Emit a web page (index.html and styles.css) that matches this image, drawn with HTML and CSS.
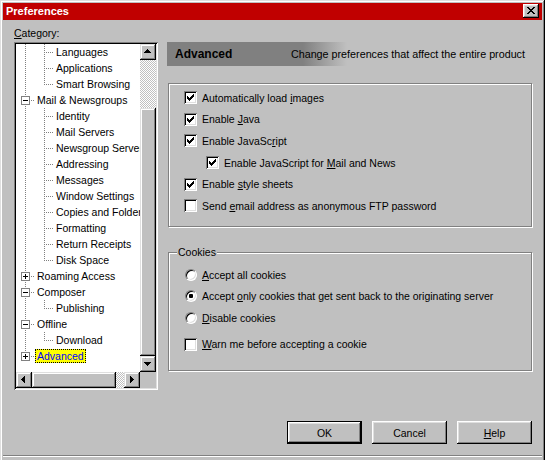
FILE: index.html
```html
<!DOCTYPE html>
<html>
<head>
<meta charset="utf-8">
<title>Preferences</title>
<link rel="stylesheet" href="styles.css">
</head>
<body>
<div class="window">
  <div class="titlebar">
    <span class="title">Preferences</span>
    <span class="close"><svg width="8" height="7" viewBox="0 0 8 7"><path d="M0 0h2v1H0zM6 0h2v1H6zM1 1h2v1H1zM5 1h2v1H5zM2 2h4v1H2zM3 3h2v1H3zM2 4h4v1H2zM1 5h2v1H1zM5 5h2v1H5zM0 6h2v1H0zM6 6h2v1H6z" fill="#000"/></svg></span>
  </div>

  <div class="main">
    <div class="left">
      <div class="cat-label"><u>C</u>ategory:</div>
      <div class="treebox">
        <div class="tree-area">
          <div class="tree">
            <div class="row"><span class="ind"></span><span class="br"></span><span class="lbl">Languages</span></div>
            <div class="row"><span class="ind"></span><span class="br"></span><span class="lbl">Applications</span></div>
            <div class="row"><span class="ind"></span><span class="br last"></span><span class="lbl">Smart Browsing</span></div>
            <div class="row"><span class="node"><span class="box"></span></span><span class="lbl">Mail &amp; Newsgroups</span></div>
            <div class="row"><span class="ind"></span><span class="br"></span><span class="lbl">Identity</span></div>
            <div class="row"><span class="ind"></span><span class="br"></span><span class="lbl">Mail Servers</span></div>
            <div class="row"><span class="ind"></span><span class="br"></span><span class="lbl">Newsgroup Servers</span></div>
            <div class="row"><span class="ind"></span><span class="br"></span><span class="lbl">Addressing</span></div>
            <div class="row"><span class="ind"></span><span class="br"></span><span class="lbl">Messages</span></div>
            <div class="row"><span class="ind"></span><span class="br"></span><span class="lbl">Window Settings</span></div>
            <div class="row"><span class="ind"></span><span class="br"></span><span class="lbl">Copies and Folders</span></div>
            <div class="row"><span class="ind"></span><span class="br"></span><span class="lbl">Formatting</span></div>
            <div class="row"><span class="ind"></span><span class="br"></span><span class="lbl">Return Receipts</span></div>
            <div class="row"><span class="ind"></span><span class="br last"></span><span class="lbl">Disk Space</span></div>
            <div class="row"><span class="node"><span class="box plus"></span></span><span class="lbl">Roaming Access</span></div>
            <div class="row"><span class="node"><span class="box"></span></span><span class="lbl">Composer</span></div>
            <div class="row"><span class="ind"></span><span class="br last"></span><span class="lbl">Publishing</span></div>
            <div class="row"><span class="node"><span class="box"></span></span><span class="lbl">Offline</span></div>
            <div class="row"><span class="ind"></span><span class="br last"></span><span class="lbl">Download</span></div>
            <div class="row"><span class="node last"><span class="box plus"></span></span><span class="lbl sel">Advanced</span></div>
          </div>
          <div class="vscroll">
            <div class="sbtn"><svg width="16" height="16" viewBox="0 0 16 16"><path d="M7 5h1v1H7zM6 6h3v1H6zM5 7h5v1H5zM4 8h7v1H4z" fill="#000"/></svg></div>
            <div class="vtrack"></div>
            <div class="vthumb"></div>
            <div class="sbtn"><svg width="16" height="16" viewBox="0 0 16 16"><path d="M4 6h7v1H4zM5 7h5v1H5zM6 8h3v1H6zM7 9h1v1H7z" fill="#000"/></svg></div>
          </div>
        </div>
        <div class="hrow">
          <div class="hscroll">
            <div class="sbtn"><svg width="16" height="16" viewBox="0 0 16 16"><path d="M5 7h1v1H5zM6 6h1v3H6zM7 5h1v5H7zM8 4h1v7H8z" fill="#000"/></svg></div>
            <div class="hthumb"></div>
            <div class="htrack"></div>
            <div class="sbtn"><svg width="16" height="16" viewBox="0 0 16 16"><path d="M6 4h1v7H6zM7 5h1v5H7zM8 6h1v3H8zM9 7h1v1H9z" fill="#000"/></svg></div>
          </div>
          <div class="corner"></div>
        </div>
      </div>
    </div>

    <div class="right">
      <div class="header">
        <span class="h-title">Advanced</span>
        <span class="h-desc">Change preferences that affect the entire product</span>
      </div>

      <div class="group opts">
        <div class="opt"><span class="cb"><svg width="13" height="13" viewBox="0 0 13 13"><path d="M3 5h1v3H3zM4 6h1v3H4zM5 7h1v3H5zM6 6h1v3H6zM7 5h1v3H7zM8 4h1v3H8zM9 3h1v3H9z" fill="#000"/></svg></span><span>Automatically load <u>i</u>mages</span></div>
        <div class="opt"><span class="cb"><svg width="13" height="13" viewBox="0 0 13 13"><path d="M3 5h1v3H3zM4 6h1v3H4zM5 7h1v3H5zM6 6h1v3H6zM7 5h1v3H7zM8 4h1v3H8zM9 3h1v3H9z" fill="#000"/></svg></span><span>Enable <u>J</u>ava</span></div>
        <div class="opt"><span class="cb"><svg width="13" height="13" viewBox="0 0 13 13"><path d="M3 5h1v3H3zM4 6h1v3H4zM5 7h1v3H5zM6 6h1v3H6zM7 5h1v3H7zM8 4h1v3H8zM9 3h1v3H9z" fill="#000"/></svg></span><span>Enable JavaSc<u>r</u>ipt</span></div>
        <div class="opt sub"><span class="cb"><svg width="13" height="13" viewBox="0 0 13 13"><path d="M3 5h1v3H3zM4 6h1v3H4zM5 7h1v3H5zM6 6h1v3H6zM7 5h1v3H7zM8 4h1v3H8zM9 3h1v3H9z" fill="#000"/></svg></span><span>Enable JavaScript for <u>M</u>ail and News</span></div>
        <div class="opt"><span class="cb"><svg width="13" height="13" viewBox="0 0 13 13"><path d="M3 5h1v3H3zM4 6h1v3H4zM5 7h1v3H5zM6 6h1v3H6zM7 5h1v3H7zM8 4h1v3H8zM9 3h1v3H9z" fill="#000"/></svg></span><span>Enable <u>s</u>tyle sheets</span></div>
        <div class="opt"><span class="cb"></span><span>Send <u>e</u>mail address as anonymous FTP password</span></div>
      </div>

      <div class="group cookies">
        <span class="legend">Cookies</span>
        <div class="opt"><span class="rb"></span><span><u>A</u>ccept all cookies</span></div>
        <div class="opt"><span class="rb on"></span><span>Accept <u>o</u>nly cookies that get sent back to the originating server</span></div>
        <div class="opt"><span class="rb"></span><span><u>D</u>isable cookies</span></div>
        <div class="opt warn"><span class="cb"></span><span><u>W</u>arn me before accepting a cookie</span></div>
      </div>
    </div>
  </div>

  <div class="footer">
    <div class="btn default">OK</div>
    <div class="btn">Cancel</div>
    <div class="btn"><span><u>H</u>elp</span></div>
  </div>
  <div class="bottom-line"></div>
</div>
</body>
</html>
```

FILE: styles.css
```css
* { box-sizing: border-box; }

html, body {
  margin: 0;
  padding: 0;
  width: 545px;
  height: 460px;
  overflow: hidden;
  background: #c0c0c0;
}

body {
  font-family: "Liberation Sans", Arial, sans-serif;
  font-size: 10.5px;
  color: #000;
}

u { text-decoration-thickness: 1px; text-underline-offset: 1px; }

.window {
  width: 545px;
  height: 470px;
  padding: 3px;
  background: #c0c0c0;
  box-shadow: inset -1px -1px #000, inset 1px 1px #dfdfdf, inset -2px -2px #808080, inset 2px 2px #fff;
  display: flex;
  flex-direction: column;
}

/* title bar */
.titlebar {
  height: 17px;
  background: #c00000;
  display: flex;
  align-items: flex-start;
  justify-content: space-between;
  padding: 0 3px 0 3px;
  flex: none;
}
.title {
  color: #fff;
  font-weight: bold;
  font-size: 11px;
  line-height: 17px;
}
.close {
  width: 16px;
  height: 14px;
  margin-top: 1px;
  background: #c0c0c0;
  box-shadow: inset -1px -1px #000, inset 1px 1px #fff, inset -2px -2px #808080, inset 2px 2px #dfdfdf;
  display: flex;
  align-items: center;
  justify-content: center;
  padding: 0 1px 1px 0;
}
.close svg { display: block; }

/* main */
.main {
  display: flex;
  gap: 10px;
  padding: 7px 0 0 11px;
  flex: none;
}

.left { width: 144px; flex: none; }
.cat-label { line-height: 13px; height: 13px; margin-bottom: 2px; }

.treebox {
  width: 144px;
  height: 348px;
  padding: 2px;
  background: #c0c0c0;
  box-shadow: inset 1px 1px #808080, inset -1px -1px #fff, inset 2px 2px #000, inset -2px -2px #dfdfdf;
  display: flex;
  flex-direction: column;
}
.tree-area { display: flex; height: 328px; }
.tree {
  width: 124px;
  background: #fff;
  overflow: hidden;
}
.row {
  height: 16px;
  display: flex;
  align-items: center;
  white-space: nowrap;
}
.ind {
  width: 28px;
  height: 16px;
  flex: none;
  background: repeating-linear-gradient(#808080 0 1px, transparent 1px 2px) 9px 0 / 1px 100% no-repeat;
}
.br {
  width: 10px;
  height: 16px;
  flex: none;
  background:
    repeating-linear-gradient(to right, #808080 0 1px, transparent 1px 2px) 2px 8px / 8px 1px no-repeat,
    repeating-linear-gradient(#808080 0 1px, transparent 1px 2px) 0 0 / 1px 100% no-repeat;
}
.br.last {
  background:
    repeating-linear-gradient(to right, #808080 0 1px, transparent 1px 2px) 2px 8px / 8px 1px no-repeat,
    repeating-linear-gradient(#808080 0 1px, transparent 1px 2px) 0 0 / 1px 9px no-repeat;
}
.node {
  width: 19px;
  height: 16px;
  flex: none;
  display: flex;
  align-items: flex-start;
  background:
    repeating-linear-gradient(to right, #808080 0 1px, transparent 1px 2px) 15px 8px / 4px 1px no-repeat,
    repeating-linear-gradient(#808080 0 1px, transparent 1px 2px) 9px 0 / 1px 100% no-repeat;
}
.node.last {
  background:
    repeating-linear-gradient(to right, #808080 0 1px, transparent 1px 2px) 15px 8px / 4px 1px no-repeat,
    repeating-linear-gradient(#808080 0 1px, transparent 1px 2px) 9px 0 / 1px 9px no-repeat;
}
.box {
  display: block;
  width: 9px;
  height: 9px;
  margin: 4px 0 0 5px;
  border: 1px solid #808080;
  background: #fff linear-gradient(#000, #000) center / 5px 1px no-repeat;
}
.box.plus {
  background:
    linear-gradient(#000, #000) center / 5px 1px no-repeat,
    linear-gradient(#000, #000) center / 1px 5px no-repeat,
    #fff;
}
.lbl {
  display: block;
  height: 14px;
  line-height: 12px;
  padding: 0 1px;
  border: 1px solid transparent;
}
.lbl.sel {
  background: #ffff00;
  color: #0000ff;
  border: 1px dotted #000;
}

/* scrollbars */
.vscroll {
  width: 16px;
  display: flex;
  flex-direction: column;
}
.sbtn, .vthumb, .hthumb {
  background: #c0c0c0;
  box-shadow: inset -1px -1px #000, inset 1px 1px #dfdfdf, inset -2px -2px #808080, inset 2px 2px #fff;
}
.sbtn { width: 16px; height: 16px; flex: none; }
.sbtn svg { display: block; }
.vtrack, .htrack {
  background: repeating-conic-gradient(#fff 0 25%, #c0c0c0 0 50%) 0 0 / 2px 2px;
}
.vtrack { height: 48px; flex: none; }
.vthumb { flex: 1; }

.hrow { display: flex; height: 16px; }
.hscroll { width: 124px; display: flex; }
.hthumb { width: 84px; flex: none; }
.htrack { flex: 1; }
.corner { width: 16px; background: #c0c0c0; }

/* right column */
.right {
  width: 364px;
  flex: none;
  padding-top: 15px;
}
.header {
  margin-left: -1px;
  height: 24px;
  background: linear-gradient(to right, #808080 136px, #c0c0c0 180px);
  display: flex;
  align-items: center;
  justify-content: space-between;
  padding: 0 7px 0 8px;
}
.h-title { font-weight: bold; font-size: 12px; }
.h-desc { font-size: 10.75px; }

.group {
  border: 1px solid #808080;
  box-shadow: inset 1px 1px #fff, 1px 1px #fff;
}
.opts {
  margin-top: 17px;
  height: 144px;
  padding: 3px 0 0 15px;
}
.opt {
  height: 21.6px;
  display: flex;
  align-items: center;
  gap: 5px;
  white-space: nowrap;
}
.opt.sub { margin-left: 22px; }

.cb {
  width: 13px;
  height: 13px;
  flex: none;
  background: #fff;
  box-shadow: inset 1px 1px #808080, inset -1px -1px #fff, inset 2px 2px #000, inset -2px -2px #dfdfdf;
}
.cb svg { display: block; }

.cookies {
  position: relative;
  margin-top: 25px;
  height: 119px;
  padding: 11px 0 0 15px;
}
.legend {
  position: absolute;
  top: -7px;
  left: 8px;
  padding: 0 1px;
  line-height: 13px;
  background: #c0c0c0;
}
.rb {
  width: 12px;
  height: 12px;
  flex: none;
  margin-left: 1px;
  border-radius: 50%;
  background: #fff;
  border: 1px solid;
  border-color: #808080 #fff #fff #808080;
  box-shadow: inset 1px 1px #000, inset -1px -1px #dfdfdf;
}
.rb.on {
  background: radial-gradient(circle, #000 0 2px, #fff 2.5px);
}
.opt.warn { margin-top: 4.6px; }

/* footer */
.footer {
  display: flex;
  justify-content: flex-end;
  gap: 10px;
  padding-right: 10px;
  margin-top: 31px;
  flex: none;
}
.btn {
  width: 75px;
  height: 23px;
  background: #c0c0c0;
  box-shadow: inset -1px -1px #000, inset 1px 1px #fff, inset -2px -2px #808080, inset 2px 2px #dfdfdf;
  display: flex;
  align-items: center;
  justify-content: center;
  font-size: 10.5px;
}
.btn.default {
  border: 1px solid #000;
}

.bottom-line {
  margin-top: 11px;
  height: 2px;
  border-top: 1px solid #808080;
  border-bottom: 1px solid #fff;
  flex: none;
}
```
